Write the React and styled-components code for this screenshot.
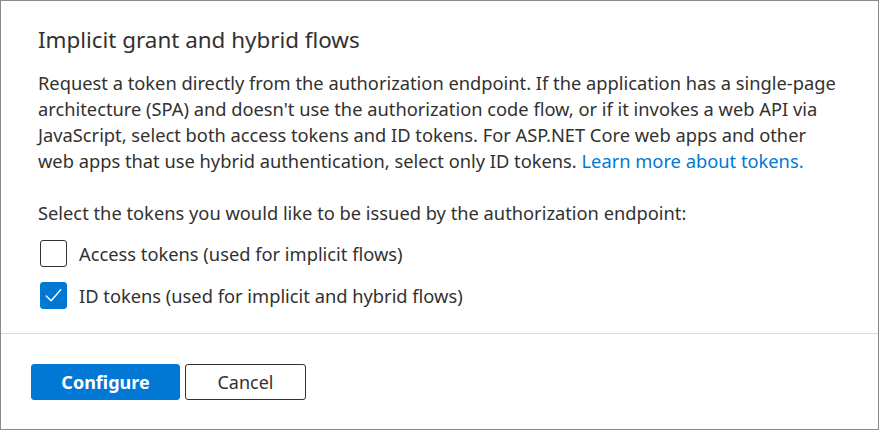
import React from "react";
import styled, { createGlobalStyle } from "styled-components";

const Global = createGlobalStyle`
  html, body { margin: 0; padding: 0; background: #ffffff; }
  body { font-family: "Noto Sans", "Open Sans", sans-serif; color: #323130; }
`;

const Frame = styled.div`
  box-sizing: border-box;
  width: 879px;
  height: 430px;
  border: 1px solid #8a8a8a;
  background: #fff;
  display: flex;
  flex-direction: column;
`;

const Body = styled.section`
  padding: 24px 37px 0 37px;
  height: 333px;
  flex: none;
  box-sizing: border-box;
  border-bottom: 1px solid #dcdcdc;
`;

const Title = styled.h2`
  margin: 0;
  font-size: 22.4px;
  font-weight: 400;
  line-height: 30px;
  color: #323130;
  white-space: nowrap;
`;

const Paragraph = styled.p`
  margin: 15px 0 0 0;
  font-size: 18.3px;
  line-height: 26px;
  color: #323130;
`;

const Line = styled.span`
  display: block;
  white-space: nowrap;
`;

const Link = styled.a`
  color: #0078d4;
  text-decoration: none;
`;

const Prompt = styled.p`
  margin: 26px 0 0 0;
  font-size: 18.3px;
  line-height: 26px;
  white-space: nowrap;
`;

const Options = styled.div`
  display: flex;
  flex-direction: column;
  gap: 15px;
  margin-top: 14px;
`;

const Option = styled.label`
  display: flex;
  align-items: center;
  gap: 12px;
  padding-left: 2px;
  font-size: 18.3px;
  line-height: 26px;
  white-space: nowrap;
  cursor: pointer;
`;

const Box = styled.span`
  box-sizing: border-box;
  width: 27px;
  height: 27px;
  border-radius: 3px;
  border: 1px solid ${(p) => (p.$checked ? "#0078d4" : "#323130")};
  background: ${(p) => (p.$checked ? "#0078d4" : "#fff")};
  display: flex;
  align-items: center;
  justify-content: center;
  flex: none;
`;

const Footer = styled.footer`
  display: flex;
  gap: 5px;
  padding: 30px 0 0 30px;
`;

const Button = styled.button`
  box-sizing: border-box;
  height: 36px;
  width: ${(p) => p.$w}px;
  border-radius: 3px;
  font-family: "Noto Sans", "Open Sans", sans-serif;
  font-size: 18px;
  font-weight: ${(p) => (p.$primary ? 700 : 400)};
  color: ${(p) => (p.$primary ? "#ffffff" : "#323130")};
  background: ${(p) => (p.$primary ? "#0078d4" : "#ffffff")};
  border: 1px solid ${(p) => (p.$primary ? "#0078d4" : "#323130")};
  padding: 0;
  cursor: pointer;
`;

function Check({ checked }) {
  return (
    <Box $checked={checked}>
      {checked && (
        <svg width="26" height="26" viewBox="0 0 26 26" fill="none">
          <path d="M5.5 13 L10.5 18 L20.5 6.5" stroke="#fff" strokeWidth="1.4" strokeLinecap="round" strokeLinejoin="round" />
        </svg>
      )}
    </Box>
  );
}

export default function App() {
  return (
    <>
      <Global />
      <Frame>
        <Body>
          <Title>Implicit grant and hybrid flows</Title>
          <Paragraph>
            <Line>Request a token directly from the authorization endpoint. If the application has a single-page</Line>
            <Line>architecture (SPA) and doesn't use the authorization code flow, or if it invokes a web API via</Line>
            <Line>JavaScript, select both access tokens and ID tokens. For ASP.NET Core web apps and other</Line>
            <Line>
              web apps that use hybrid authentication, select only ID tokens. <Link href="#">Learn more about tokens.</Link>
            </Line>
          </Paragraph>
          <Prompt>Select the tokens you would like to be issued by the authorization endpoint:</Prompt>
          <Options>
            <Option>
              <Check checked={false} />
              Access tokens (used for implicit flows)
            </Option>
            <Option>
              <Check checked={true} />
              ID tokens (used for implicit and hybrid flows)
            </Option>
          </Options>
        </Body>
        <Footer>
          <Button $primary $w={149}>Configure</Button>
          <Button $w={121}>Cancel</Button>
        </Footer>
      </Frame>
    </>
  );
}
